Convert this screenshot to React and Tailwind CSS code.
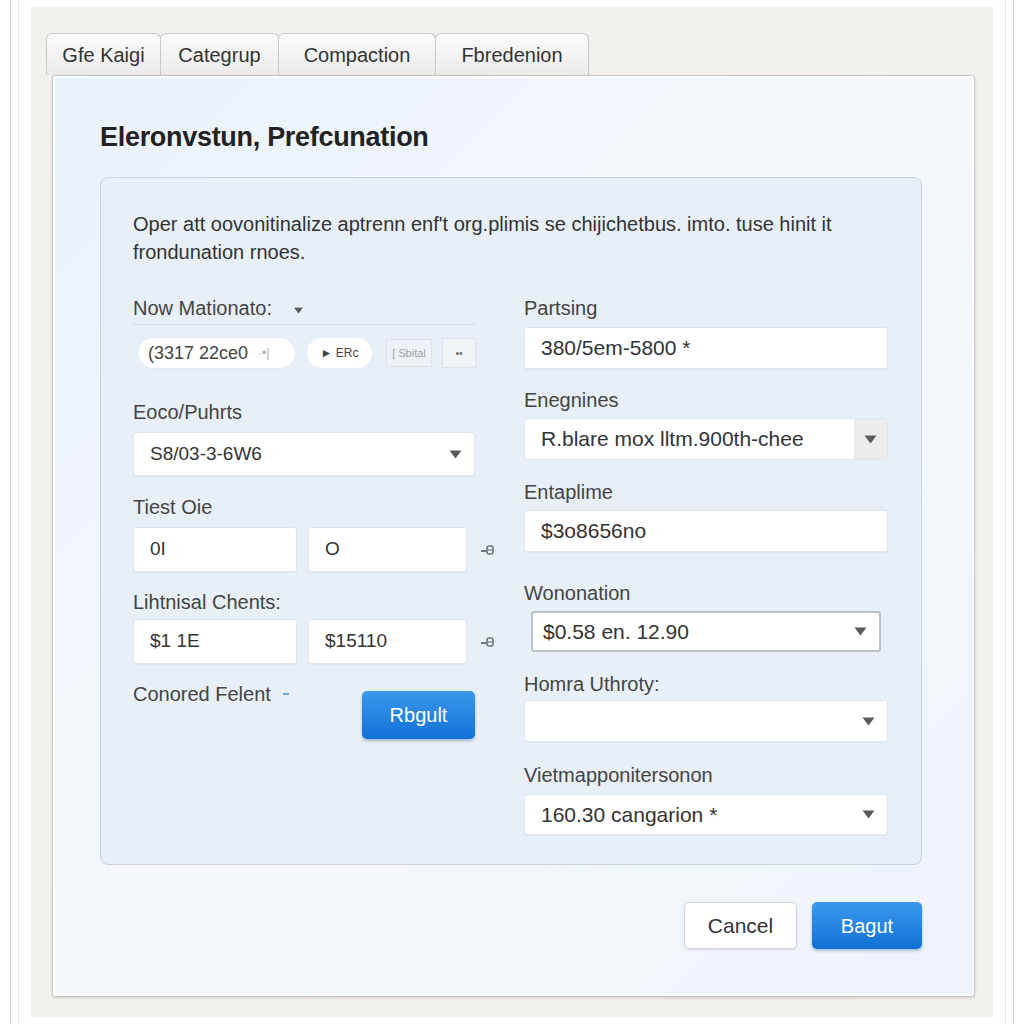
import React from 'react';

const font = { fontFamily: '"Liberation Sans", Arial, sans-serif' };

const Caret = ({ className = '' }) => (
  <svg width="13" height="9" viewBox="0 0 13 9" className={`shrink-0 ${className}`}>
    <path d="M0.5 0.5 H12.5 L6.5 8.5 Z" fill="#5a5a5a" />
  </svg>
);

const LinkIcon = () => (
  <svg width="14" height="12" viewBox="0 0 14 12" className="shrink-0">
    <path d="M0 7 H5" stroke="#6b7280" strokeWidth="2" />
    <rect x="6" y="2" width="6" height="8" rx="2" fill="none" stroke="#6b7280" strokeWidth="1.6" />
    <path d="M6 6 H12" stroke="#6b7280" strokeWidth="1.2" />
  </svg>
);

const Label = ({ children, className = '' }) => (
  <div className={`h-[24px] leading-[24px] text-[20px] text-[#444] whitespace-nowrap ${className}`}>{children}</div>
);

const Field = ({ children, className = '', text = 'text-[21px]' }) => (
  <div
    className={`shrink-0 flex items-center bg-white border border-[#dfe5ec] rounded-[3px] shadow-[0_1px_1px_rgba(0,0,0,0.04)] px-[16px] text-[#333] whitespace-nowrap ${text} ${className}`}
  >
    {children}
  </div>
);

const Tab = ({ label, w }) => (
  <div
    className={`${w} h-[42px] flex items-center justify-center text-[20px] text-[#333] border border-b-0 border-[#c9c9c9] rounded-t-[6px] bg-gradient-to-b from-[#fbfbfb] to-[#ebebeb] -mr-px`}
  >
    {label}
  </div>
);

const BlueButton = ({ children, className = '' }) => (
  <button
    className={`rounded-[5px] bg-gradient-to-b from-[#3b98ec] to-[#1070d6] text-white text-[20px] shadow-[0_2px_3px_rgba(0,60,140,0.3)] ${className}`}
  >
    {children}
  </button>
);

export default function App() {
  return (
    <div className="h-[1024px] bg-white px-[10px]" style={font}>
      <div className="h-full border-x border-[#d9d9d9] px-[7px]">
        <div className="h-full border-x border-[#e3e3e3] px-[12px] py-[7px]">
          <div className="h-full bg-[#f2f1ee] pt-[26px] pl-[15px] pr-[18px] pb-[20px] flex flex-col">
            {/* tabs */}
            <div className="flex">
              <Tab label="Gfe Kaigi" w="w-[115px]" />
              <Tab label="Categrup" w="w-[119px]" />
              <Tab label="Compaction" w="w-[158px]" />
              <Tab label="Fbredenion" w="w-[154px]" />
            </div>

            {/* panel */}
            <div className="ml-[6px] flex-1 border border-[#c6c6c6] rounded-[3px] shadow-[0_1px_3px_rgba(0,0,0,0.15),inset_0_0_0_2px_#ffffff] bg-gradient-to-br from-[#e9f1f9] via-[#f4f8fc] to-[#edf3f9] pl-[47px] pr-[52px] pt-[46px] flex flex-col">
              <h1 className="text-[27px] font-bold text-[#222] leading-[30px] tracking-[-0.3px]">
                Eleronvstun, Prefcunation
              </h1>

              <div className="mt-[25px] h-[688px] border border-[#c8d5e2] rounded-[8px] bg-[#e8eff7] pl-[32px] pr-[33px] pt-[32px]">
                <p className="text-[20px] leading-[28px] text-[#333] whitespace-nowrap">
                  Oper att oovonitinalize aptrenn enf't org.plimis se chijichetbus. imto. tuse hinit it
                  <br />
                  frondunation rnoes.
                </p>

                <div className="mt-[30px] flex gap-[49px]">
                  {/* left column */}
                  <div className="w-[342px] shrink-0">
                    <div className="h-[29px] border-b border-[#d6dee8] flex items-start">
                      <Label>Now Mationato:</Label>
                      <Caret className="ml-[20px] mt-[10px] scale-75" />
                    </div>
                    <div className="mt-[13px] h-[30px] flex items-center">
                      <div className="ml-[5px] w-[157px] h-[30px] shrink-0 rounded-full bg-white flex items-center pl-[10px] text-[18px] text-[#444] whitespace-nowrap shadow-[0_0_2px_rgba(0,0,0,0.08)]">
                        (3317 22ce0
                        <span className="ml-[10px] text-[12px] text-[#aaa]">·•|</span>
                      </div>
                      <div className="ml-[12px] w-[65px] h-[30px] shrink-0 rounded-full bg-white flex items-center justify-center text-[12px] text-[#444]">
                        ► ERc
                      </div>
                      <div className="ml-[14px] w-[46px] h-[28px] shrink-0 border border-[#dde3ea] bg-[#eef2f6] flex items-center justify-center text-[11px] text-[#9aa3ad] whitespace-nowrap">
                        [ Sbital
                      </div>
                      <div className="ml-[10px] w-[34px] h-[30px] shrink-0 border border-[#dde3ea] bg-[#f1f4f7] flex items-center justify-center text-[10px] text-[#666]">
                        ••
                      </div>
                    </div>

                    <Label className="mt-[32px]">Eoco/Puhrts</Label>
                    <Field className="mt-[8px] h-[44px] justify-between pr-[12px]" text="text-[19px]">
                      <span>S8/03-3-6W6</span>
                      <Caret />
                    </Field>

                    <Label className="mt-[19px]">Tiest Oie</Label>
                    <div className="mt-[8px] flex items-center">
                      <Field className="w-[164px] h-[45px]" text="text-[19px]">0I</Field>
                      <Field className="ml-[11px] w-[159px] h-[45px]" text="text-[19px]">O</Field>
                      <div className="ml-[14px]"><LinkIcon /></div>
                    </div>

                    <Label className="mt-[18px]">Lihtnisal Chents:</Label>
                    <div className="mt-[5px] flex items-center">
                      <Field className="w-[164px] h-[45px]" text="text-[19px]">$1 1E</Field>
                      <Field className="ml-[11px] w-[159px] h-[45px]" text="text-[19px]">$15110</Field>
                      <div className="ml-[14px]"><LinkIcon /></div>
                    </div>

                    <div className="mt-[18px] flex items-start justify-between">
                      <div className="flex items-center">
                        <Label>Conored Felent</Label>
                        <span className="ml-[12px] w-[6px] h-[2px] bg-[#6fa8dc]" />
                      </div>
                      <BlueButton className="mt-[9px] w-[113px] h-[48px]">Rbgult</BlueButton>
                    </div>
                  </div>

                  {/* right column */}
                  <div className="w-[364px] shrink-0">
                    <Label>Partsing</Label>
                    <Field className="mt-[7px] h-[42px]">380/5em-5800 *</Field>

                    <Label className="mt-[19px]">Enegnines</Label>
                    <div className="mt-[6px] h-[42px] flex bg-white border border-[#dfe5ec] rounded-[3px] overflow-hidden">
                      <div className="flex-1 flex items-center px-[16px] text-[21px] text-[#333] whitespace-nowrap">
                        R.blare mox lltm.900th-chee
                      </div>
                      <div className="w-[33px] bg-[#ececec] flex items-center justify-center">
                        <Caret />
                      </div>
                    </div>

                    <Label className="mt-[20px]">Entaplime</Label>
                    <Field className="mt-[6px] h-[42px]">$3o8656no</Field>

                    <Label className="mt-[29px]">Wononation</Label>
                    <div className="mt-[6px] mx-[7px] h-[41px] flex items-center justify-between bg-white border-2 border-[#b9c2cc] rounded-[3px] pl-[10px] pr-[12px] text-[21px] text-[#333]">
                      <span>$0.58 en. 12.90</span>
                      <Caret />
                    </div>

                    <Label className="mt-[20px]">Homra Uthroty:</Label>
                    <Field className="mt-[4px] h-[42px] justify-end pr-[12px]">
                      <Caret />
                    </Field>

                    <Label className="mt-[21px]">Vietmapponitersonon</Label>
                    <Field className="mt-[7px] h-[41px] justify-between pr-[12px]">
                      <span>160.30 cangarion *</span>
                      <Caret />
                    </Field>
                  </div>
                </div>
              </div>

              {/* footer */}
              <div className="mt-[37px] flex justify-end gap-[15px]">
                <button className="w-[113px] h-[47px] rounded-[5px] bg-white border border-[#d4d4d4] text-[21px] text-[#333] shadow-[0_1px_2px_rgba(0,0,0,0.1)]">
                  Cancel
                </button>
                <BlueButton className="w-[110px] h-[47px]">Bagut</BlueButton>
              </div>
            </div>
          </div>
        </div>
      </div>
    </div>
  );
}
